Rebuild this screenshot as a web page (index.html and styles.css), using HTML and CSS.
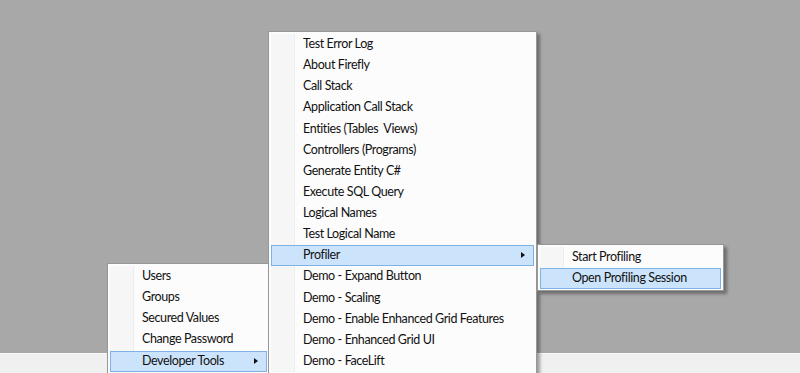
FILE: index.html
```html
<!DOCTYPE html>
<html lang="en">
<head>
  <meta charset="UTF-8">
  <title>Developer Tools menu</title>
  <link rel="stylesheet" href="styles.css">
</head>
<body>
  <div class="desk"></div>
  <div class="strip"></div>

  <!-- main menu -->
  <ul class="menu menu-main">
    <li>Users</li>
    <li>Groups</li>
    <li>Secured Values</li>
    <li>Change Password</li>
    <li class="active sub">Developer Tools</li>
  </ul>

  <!-- developer tools -->
  <ul class="menu menu-dev">
    <li>Test Error Log</li>
    <li>About Firefly</li>
    <li>Call Stack</li>
    <li>Application Call Stack</li>
    <li>Entities (Tables&nbsp; Views)</li>
    <li>Controllers (Programs)</li>
    <li>Generate Entity C#</li>
    <li>Execute SQL Query</li>
    <li>Logical Names</li>
    <li>Test Logical Name</li>
    <li class="active sub">Profiler</li>
    <li>Demo - Expand Button</li>
    <li>Demo - Scaling</li>
    <li>Demo - Enable Enhanced Grid Features</li>
    <li>Demo - Enhanced Grid UI</li>
    <li>Demo - FaceLift</li>
  </ul>

  <!-- profiler -->
  <ul class="menu menu-prof">
    <li>Start Profiling</li>
    <li class="active">Open Profiling Session</li>
  </ul>
</body>
</html>
```

FILE: styles.css
```css
html, body { margin: 0; height: 100%; }
body { display: flex; flex-direction: column; background: #a8a8a8; font-family: Lato, "Liberation Sans", sans-serif; font-size: 12.5px; letter-spacing: -0.4px; color: #111; overflow: hidden; }
.desk { flex: 1; background: #a8a8a8; }
.strip { height: 19px; background: #f0f0f0; border-top: 1px solid #fafafa; }

.menu { position: absolute; margin: 0; padding: 2px; list-style: none; background: #fcfcfc; border: 1px solid #979797; box-shadow: 3px 3px 3px rgba(0, 0, 0, 0.35); box-sizing: border-box; }
.menu::before { content: ""; position: absolute; left: 2px; top: 2px; bottom: 2px; width: 23px; background: #f6f6f6; border-right: 1px solid #ededed; }
.menu li { position: relative; height: 21.13px; line-height: 18px; padding-left: 31px; white-space: nowrap; border: 1px solid transparent; box-sizing: border-box; }
.menu li.active { background: #cce4fb; border-color: #7eb2e6; }
.menu li.sub::after { content: ""; position: absolute; right: 8px; top: 6px; border-left: 4px solid #111; border-top: 3.5px solid transparent; border-bottom: 3.5px solid transparent; }

.menu-main { left: 107px; top: 263px; width: 163px; height: 120px; z-index: 1; }
.menu-dev { left: 268px; top: 31px; width: 269px; height: 344px; z-index: 2; }
.menu-prof { left: 537px; top: 244px; width: 187px; height: 47px; z-index: 3; }
```
